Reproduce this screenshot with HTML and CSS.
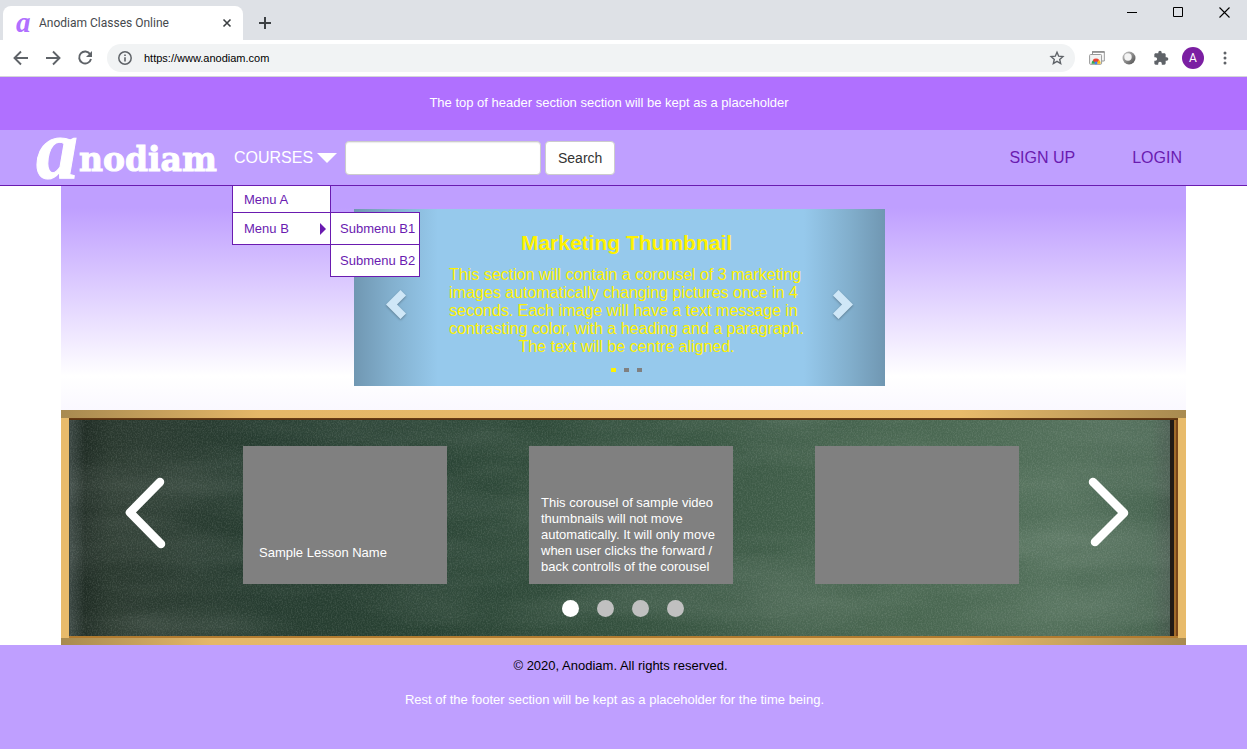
FILE: index.html
```html
<!DOCTYPE html>
<html lang="en">
<head>
<meta charset="utf-8">
<meta name="viewport" content="width=device-width, initial-scale=1">
<title>Anodiam Classes Online</title>
<link rel="stylesheet" href="styles.css">
</head>
<body>
<div class="browser">
  <div class="tabstrip">
    <div class="tab">
      <span class="favicon" aria-hidden="true">a</span>
      <span class="tab-title">Anodiam Classes Online</span>
      <button class="icon-btn" aria-label="Close tab"><svg width="10" height="10" viewBox="0 0 10 10"><path d="M1.500 1.500l7 7M8.500 1.500l-7 7" stroke="#3c4043" stroke-width="1.600"/></svg></button>
    </div>
    <button class="icon-btn new-tab" aria-label="New tab"><svg width="12" height="12" viewBox="0 0 12 12"><path d="M6 0v12M0 6h12" stroke="#3c4043" stroke-width="2"/></svg></button>
    <div class="window-controls">
      <button class="icon-btn" aria-label="Minimize"><svg width="10" height="10" viewBox="0 0 10 10"><path d="M0 5.500h10" stroke="#000"/></svg></button>
      <button class="icon-btn" aria-label="Maximize"><svg width="10" height="10" viewBox="0 0 10 10"><path d="M.5.5h9v9h-9z" stroke="#000" fill="none"/></svg></button>
      <button class="icon-btn" aria-label="Close"><svg width="11" height="11" viewBox="0 0 11 11"><path d="M.5.5l10 10M10.500.5l-10 10" stroke="#000" stroke-width="1.100"/></svg></button>
    </div>
  </div>
  <div class="toolbar">
    <div class="toolbar-nav">
      <button class="icon-btn" aria-label="Back"><svg width="16" height="16" viewBox="0 0 16 16"><path d="M15 8H2M8 1.500L1.500 8 8 14.500" stroke="#5f6368" stroke-width="1.900" fill="none"/></svg></button>
      <button class="icon-btn" aria-label="Forward"><svg width="16" height="16" viewBox="0 0 16 16"><path d="M1 8h13M8 1.500L14.500 8 8 14.500" stroke="#5f6368" stroke-width="1.900" fill="none"/></svg></button>
      <button class="icon-btn" aria-label="Reload"><svg width="16" height="16" viewBox="0 0 16 16"><path d="M13.200 4.200A6 6 0 1 0 14 9" stroke="#5f6368" stroke-width="1.900" fill="none"/><path d="M15 1v6H9z" fill="#5f6368"/></svg></button>
    </div>
    <div class="omnibox">
      <svg width="14" height="14" viewBox="0 0 14 14"><circle cx="7" cy="7" r="6.200" fill="none" stroke="#5f6368" stroke-width="1.500"/><path d="M7 6.200v4.300M7 3.400v1.600" stroke="#5f6368" stroke-width="1.600"/></svg>
      <input class="url" type="text" aria-label="Address" value="https://www.anodiam.com">
      <button class="icon-btn" aria-label="Bookmark"><svg width="14" height="14" viewBox="0 0 14 14"><path d="M7 1.300l1.700 3.900 4.200.4-3.200 2.800.95 4.100L7 10.300l-3.650 2.200.95-4.100L1.100 5.600l4.200-.4z" fill="none" stroke="#5f6368" stroke-width="1.400"/></svg></button>
    </div>
    <div class="extensions">
      <button class="icon-btn" aria-label="Chrome windows"><svg width="16" height="14" viewBox="0 0 16 14"><path d="M3.500 9V.7h11.800V10H13" fill="#fff" stroke="#999"/><path d="M3 1h12.500" stroke="#888" stroke-width="1.500"/><rect x=".6" y="3.500" width="12" height="9.800" rx="1" fill="#f2f2f2" stroke="#999"/><path d="M2.500 12.800a4.500 4.500 0 0 1 2.100-4l2 2.900-.1 1.100z" fill="#34a853"/><path d="M3.800 9a4.500 4.500 0 0 1 6.500 0l-2.100 2.600H5.600z" fill="#ea4335"/><path d="M10.300 9a4.500 4.500 0 0 1 1.300 3.800H8V11.500z" fill="#fbbc05"/><circle cx="7" cy="12" r="1.400" fill="#4285f4"/></svg></button>
      <button class="icon-btn" aria-label="Extension"><svg width="14" height="14" viewBox="0 0 14 14"><defs><linearGradient id="ring" x1="0" y1="0" x2="1" y2="1"><stop offset="0" stop-color="#ccc"/><stop offset=".5" stop-color="#8a8a8a"/><stop offset="1" stop-color="#4a4a4a"/></linearGradient></defs><circle cx="7" cy="7" r="6.500" fill="url(#ring)"/><circle cx="6" cy="6" r="3.700" fill="#f4f4f4"/></svg></button>
      <button class="icon-btn" aria-label="Extensions"><svg width="16" height="16" viewBox="0 0 24 24"><path fill="#5f6368" d="M20.500 11H19V7c0-1.100-.9-2-2-2h-4V3.500a2.500 2.500 0 0 0-5 0V5H4c-1.100 0-2 .9-2 2v3.800h1.500a2.700 2.700 0 0 1 0 5.400H2V20c0 1.100.9 2 2 2h3.800v-1.500a2.700 2.700 0 0 1 5.400 0V22H17c1.100 0 2-.9 2-2v-4h1.500a2.500 2.500 0 0 0 0-5z"/></svg></button>
      <button class="avatar" aria-label="Profile A">A</button>
      <button class="icon-btn" aria-label="More"><svg width="4" height="14" viewBox="0 0 4 14"><circle cx="2" cy="2" r="1.500" fill="#5f6368"/><circle cx="2" cy="7" r="1.500" fill="#5f6368"/><circle cx="2" cy="12" r="1.500" fill="#5f6368"/></svg></button>
    </div>
  </div>
</div>

<header>
  <p class="announce">The top of header section section will be kept as a placeholder</p>
  <nav class="navbar">
    <a class="logo" href="#" aria-label="Anodiam"><span class="logo-a">a</span><span class="logo-rest">nodiam</span></a>
    <div class="courses">
      <button class="courses-btn" aria-expanded="true">COURSES<svg width="20" height="10" viewBox="0 0 20 10"><path d="M0 0h20L10 10z" fill="#fff"/></svg></button>
      <ul class="menu">
        <li><a href="#">Menu A</a></li>
        <li class="has-sub"><a href="#">Menu B<svg width="6" height="12" viewBox="0 0 6 12"><path d="M0 0l6 6-6 6z" fill="#6a1bb0"/></svg></a>
          <ul class="menu submenu">
            <li><a href="#">Submenu B1</a></li>
            <li><a href="#">Submenu B2</a></li>
          </ul>
        </li>
      </ul>
    </div>
    <form class="search">
      <input type="search" aria-label="Search courses">
      <button type="button">Search</button>
    </form>
    <div class="account">
      <a href="#">SIGN UP</a>
      <a href="#">LOGIN</a>
    </div>
  </nav>
</header>

<main>
  <section class="hero">
    <div class="carousel">
      <button class="slide-btn" aria-label="Previous slide"><svg width="20" height="29" viewBox="0 0 20 29"><path d="M14.500 0L20 5.500 11 14.500l9 9-5.500 5.500L0 14.500z" fill="#cfe7f7"/></svg></button>
      <div class="slide">
        <h1>Marketing Thumbnail</h1>
        <p>This section will contain a corousel of 3 marketing<br>images automatically changing pictures once in 4<br>seconds. Each image will have a text message in<br>contrasting color, with a heading and a paragraph.</p>
        <p>The text will be centre aligned.</p>
        <div class="ticks">
          <button class="tick active" aria-label="Slide 1"></button>
          <button class="tick" aria-label="Slide 2"></button>
          <button class="tick" aria-label="Slide 3"></button>
        </div>
      </div>
      <button class="slide-btn" aria-label="Next slide"><svg width="20" height="29" viewBox="0 0 20 29"><path d="M5.500 0L0 5.500l9 9-9 9L5.500 29 20 14.500z" fill="#cfe7f7"/></svg></button>
    </div>
  </section>

  <section class="board">
    <svg class="chalk" aria-hidden="true">
      <filter id="grain" x="0" y="0" width="100%" height="100%">
        <feTurbulence type="fractalNoise" baseFrequency="0.8 0.6" numOctaves="2" seed="4"/>
        <feColorMatrix values="0 0 0 0 .8  0 0 0 0 .85  0 0 0 0 .8  .9 0 0 0 -.35"/>
      </filter>
      <filter id="smear" x="0" y="0" width="100%" height="100%">
        <feTurbulence type="fractalNoise" baseFrequency="0.005 0.02" numOctaves="3" seed="9"/>
        <feColorMatrix values="0 0 0 0 .8  0 0 0 0 .85  0 0 0 0 .8  .8 0 0 0 -.3"/>
      </filter>
      <rect width="100%" height="100%" filter="url(#smear)" opacity=".3"/>
      <rect width="100%" height="100%" filter="url(#grain)" opacity=".3"/>
    </svg>
    <div class="lessons">
      <button class="board-btn" aria-label="Previous lessons"><svg width="41" height="72" viewBox="0 0 41 72"><path d="M35 3L5 33.500 36 65" fill="none" stroke="#fff" stroke-width="8.500" stroke-linecap="round" stroke-linejoin="round"/></svg></button>
      <div class="cards">
        <article class="card">Sample Lesson Name</article>
        <article class="card wide-text">This corousel of sample video<br>thumbnails will not move<br>automatically. It will only move<br>when user clicks the forward /<br>back controlls of the corousel</article>
        <article class="card"></article>
      </div>
      <button class="board-btn" aria-label="Next lessons"><svg width="41" height="72" viewBox="0 0 41 72"><path d="M5 3l31 31L7 63" fill="none" stroke="#fff" stroke-width="8.500" stroke-linecap="round" stroke-linejoin="round"/></svg></button>
    </div>
    <div class="dots">
      <button class="dot active" aria-label="Page 1"></button>
      <button class="dot" aria-label="Page 2"></button>
      <button class="dot" aria-label="Page 3"></button>
      <button class="dot" aria-label="Page 4"></button>
    </div>
  </section>
</main>

<footer>
  <p class="copyright">© 2020, Anodiam. All rights reserved.</p>
  <p class="note">Rest of the footer section will be kept as a placeholder for the time being.</p>
</footer>
</body>
</html>
```
FILE: styles.css
```css
* { box-sizing: border-box; }
body {
  margin: 0;
  min-height: 100vh;
  display: flex;
  flex-direction: column;
  background: #fff;
  font-family: "Liberation Sans", Arial, sans-serif;
  font-size: 13px;
}
button { border: 0; padding: 0; background: none; font: inherit; cursor: pointer; }
a { text-decoration: none; }
p, h1, ul { margin: 0; padding: 0; }
ul { list-style: none; }
svg { display: block; overflow: visible; }

/* Browser chrome */
.tabstrip { display: flex; height: 40px; padding: 6px 17px 0 3px; background: #dee1e6; }
.tab {
  display: flex;
  align-items: center;
  width: 240px;
  padding: 0 11px 0 13px;
  border-radius: 8px 8px 0 0;
  background: #fff;
}
.favicon {
  width: 16px;
  margin-right: 7px;
  font: italic bold 29px/20px "Liberation Serif", serif;
  color: #b070ff;
  padding-bottom: 2px;
}
.tab-title { flex: 1; font: 12px Roboto, sans-serif; color: #45494d; }
.new-tab { margin-left: 16px; }
.window-controls { display: flex; align-items: flex-start; gap: 36px; margin-left: auto; padding-top: 1px; }
.toolbar { display: flex; align-items: center; height: 37px; padding: 0 11px 0 13px; border-bottom: 1px solid #d5d5d8; }
.toolbar-nav { display: flex; gap: 16px; }
.omnibox {
  flex: 1;
  display: flex;
  align-items: center;
  height: 28px;
  margin: 0 11px 0 14px;
  padding: 0 11px;
  border-radius: 14px;
  background: #f1f3f4;
}
.url { flex: 1; margin-left: 12px; padding: 0; border: 0; background: none; font: 11px "Liberation Sans", sans-serif; color: #000; }
.extensions { display: flex; align-items: center; gap: 10px; }
.extensions .icon-btn { display: flex; justify-content: center; width: 22px; }
.avatar { width: 22px; height: 22px; border-radius: 50%; background: #7b1fa2; color: #fff; font: 12px Roboto, sans-serif; }

/* Site header */
.announce { height: 53px; padding-right: 29px; background: #b070ff; color: #fff; line-height: 52px; text-align: center; }
.navbar { display: flex; align-items: center; height: 56px; padding: 0 65px 0 36px; border-bottom: 1px solid #6a1bb0; background: #bf9fff; }
.logo { display: flex; align-items: flex-start; width: 198px; height: 40px; color: #fff; }
.logo-a { width: 43px; font: italic bold 84px/24px "Liberation Serif", serif; -webkit-text-stroke: 1px #fff; }
.logo-rest { font: bold 33px/44px "DejaVu Serif", serif; -webkit-text-stroke: 1px #fff; }
.courses { position: relative; align-self: stretch; display: flex; width: 111px; }
.courses-btn { display: flex; align-items: center; gap: 4px; color: #fff; font-size: 16px; }
.menu { position: absolute; z-index: 2; top: 100%; left: -2px; width: 99px; border: 1px solid #6a1bb0; background: #fff; }
.menu a { display: flex; align-items: center; justify-content: space-between; height: 31px; padding: 0 4px 0 11px; color: #6a1bb0; }
.menu > li:first-child > a { height: 26px; }
.menu li + li { border-top: 1px solid #6a1bb0; }
.has-sub { position: relative; }
.menu .submenu { top: -1px; left: 97px; width: 90px; }
.submenu > li > a, .submenu > li:first-child > a { height: 31px; padding: 0 0 0 9px; white-space: nowrap; }
.search { display: flex; gap: 4px; }
.search input, .search button { height: 34px; border: 1px solid #ccc; border-radius: 4px; background: #fff; }
.search input { width: 196px; padding: 0 12px; font: 14px "Liberation Sans", sans-serif; box-shadow: inset 0 1px 1px rgba(0, 0, 0, 0.08); }
.search button { padding: 0 12px; color: #333; font-size: 14px; }
.account { display: flex; gap: 57px; margin-left: auto; font-size: 16px; }
.account a { color: #6a1bb0; }

/* Marketing carousel */
main { margin: 0 61px; }
.hero {
  display: flex;
  justify-content: center;
  padding: 23px 8px 24px 0;
  background: linear-gradient(#bf9fff 0, #bf9fff 22px, #fff 190px, #faf8ff 224px);
}
.carousel {
  display: flex;
  align-items: center;
  justify-content: space-between;
  width: 531px;
  padding: 0 32px;
  background: linear-gradient(90deg, #7097b2 0, #82afcd 36px, #96c9ec 84px, #96c9ec 450px, #82afcd 495px, #7097b2 100%);
}
.slide-btn { padding-top: 14px; filter: drop-shadow(0 1px 1px rgba(0, 0, 0, 0.3)); }
.slide { display: flex; flex-direction: column; align-items: center; padding: 22px 0 14px 14px; color: #fff200; font-size: 16px; line-height: 18px; }
.slide h1 { margin-bottom: 11px; font-size: 21px; line-height: 24px; }
.ticks { display: flex; gap: 8px; margin-top: 12px; }
.tick { width: 5px; height: 4px; background: #808080; }
.tick.active { background: #fff200; }

/* Chalkboard */
.board {
  position: relative;
  padding: 36px 57px 28px 64px;
  background:
    linear-gradient(90deg, #a88a50, #e5b768 200px, #e8bb6b 900px, #a88a50) top / 100% 8px no-repeat,
    linear-gradient(90deg, #a88a50, #e5b768 150px, #e8bb6b 900px, #a88a50) bottom / 100% 7px no-repeat,
    linear-gradient(#e8bb6b, #e8bb6b) left / 8px 100% no-repeat,
    linear-gradient(#e8bb6b, #e8bb6b) right / 8px 100% no-repeat,
    linear-gradient(#6b3d15, #55300f) 0 8px / 100% 2px no-repeat,
    linear-gradient(#b17b30, #b17b30) 0 calc(100% - 7px) / 100% 2px no-repeat,
    linear-gradient(90deg, #231a16 0 4px, #a26b2a 4px 6px, #7a461b 6px) calc(100% - 8px) 0 / 8px 100% no-repeat,
    linear-gradient(90deg, #3d4945 8px, #202d25 24px, #29382e 50px, #2b3b31 80px, #263c30 200px, #294334 380px, #375441 600px, #486650 850px, #53705b 1000px, #486551 1090px, #45574c 1112px);
}
.chalk { position: absolute; top: 10px; left: 9px; width: calc(100% - 25px); height: calc(100% - 19px); }
.lessons, .dots { position: relative; display: flex; }
.lessons { align-items: center; justify-content: space-between; }
.cards { display: flex; gap: 82px; padding-left: 8px; }
.card { display: flex; flex-direction: column; justify-content: flex-end; width: 204px; height: 138px; padding: 0 0 23px 16px; background: #808080; color: #fff; line-height: 16px; }
.card.wide-text { display: block; padding: 49px 0 0 12px; white-space: nowrap; }
.dots { justify-content: center; gap: 18px; margin-top: 16px; padding-right: 8px; }
.dot { width: 17px; height: 17px; border-radius: 50%; background: #c0c0c0; }
.dot.active { background: #fff; }

footer { flex: 1; padding: 13px 0; background: #bf9fff; text-align: center; line-height: 16px; }
.copyright { padding-right: 6px; color: #000; }
.note { margin-top: 18px; padding-right: 18px; color: #fff; }
```
